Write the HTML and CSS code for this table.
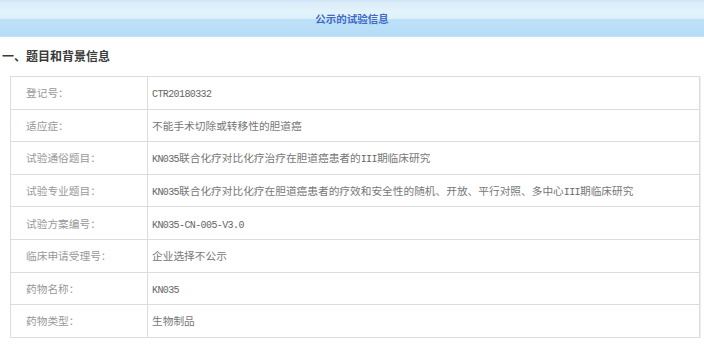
FILE: index.html
```html
<!DOCTYPE html>
<html lang="zh-CN">
<head>
<meta charset="utf-8">
<title>公示的试验信息</title>
<link rel="stylesheet" href="styles.css">
</head>
<body>
<div class="banner">公示的试验信息</div>
<h2 class="section-title">一、题目和背景信息</h2>
<table class="info">
  <colgroup><col class="col-label"><col class="col-value"></colgroup>
  <tr><td class="label">登记号：</td><td class="value"><span class="latin">CTR20180332</span></td></tr>
  <tr><td class="label">适应症：</td><td class="value">不能手术切除或转移性的胆道癌</td></tr>
  <tr><td class="label">试验通俗题目：</td><td class="value"><span class="latin">KN035</span>联合化疗对比化疗治疗在胆道癌患者的<span class="latin">III</span>期临床研究</td></tr>
  <tr><td class="label">试验专业题目：</td><td class="value"><span class="latin">KN035</span>联合化疗对比化疗在胆道癌患者的疗效和安全性的随机、开放、平行对照、多中心<span class="latin">III</span>期临床研究</td></tr>
  <tr><td class="label">试验方案编号：</td><td class="value"><span class="latin">KN035-CN-005-V3.0</span></td></tr>
  <tr><td class="label">临床申请受理号：</td><td class="value">企业选择不公示</td></tr>
  <tr><td class="label">药物名称：</td><td class="value"><span class="latin">KN035</span></td></tr>
  <tr><td class="label">药物类型：</td><td class="value">生物制品</td></tr>
</table>
</body>
</html>
```

FILE: styles.css
```css
body {
  margin: 0;
  background: #fff;
  font-family: "Noto Sans CJK SC", "Noto Sans", sans-serif;
  color: #666;
}

.banner {
  height: 37px;
  line-height: 37px;
  text-align: center;
  font-size: 10.5px;
  font-weight: bold;
  color: #4169c6;
  background: linear-gradient(to bottom, #cfe3f5 0, #dcedf9 3px, #e3f3fc 12px, #dcf0fb 19px, #bde1f8 19px, #b6dcf7 36px, #cde9fa 37px);
}

.section-title {
  margin: 9px 0 0 0;
  padding-left: 2px;
  line-height: 20px;
  font-size: 12px;
  font-weight: bold;
  color: #3a3a3a;
}

.info {
  margin: 10px 0 0 10px;
  width: 690px;
  border-collapse: collapse;
  border: 1px solid #dcdcdc;
  box-shadow: 1px 1px 0 #eeeeee;
  font-size: 10.7px;
}

.col-label { width: 137px; }

.info td {
  height: 32.6px;
  padding: 0;
  border: 1px solid #dcdcdc;
  vertical-align: middle;
  box-sizing: border-box;
}

.label {
  padding-left: 15px !important;
  color: #999;
}

.value {
  padding-left: 4px !important;
  color: #777;
}

.latin {
  font-family: "Liberation Mono", monospace;
  font-size: 10px;
  letter-spacing: -0.6px;
  color: #666;
}
```
